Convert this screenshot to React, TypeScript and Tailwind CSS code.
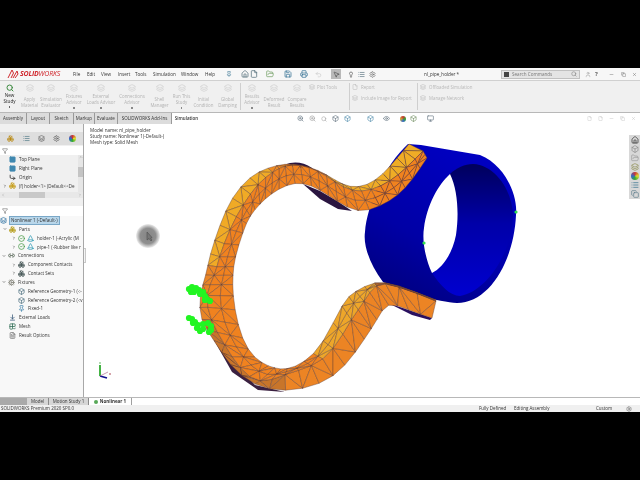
import React from 'react';
import { Filter, Home, File, FileText, FolderOpen, Save, Printer, Undo2, MousePointer2, Settings, Search, User, Minus, X, Copy, ZoomIn, Eye, Monitor, Box, ChevronRight, ChevronDown, ChevronUp, ChevronLeft, Pin, Lightbulb, List, Layers, Square, CornerDownRight, CircleCheck, Cone, Link2, Cog, ArrowDownToLine, Grid2x2Check, Boxes, type LucideIcon } from 'lucide-react';

type Pt = [number, number];

// outer edge, fold line, inner edge of the bent holder, end to end
const sections: [Pt, Pt, Pt][] = [
  [[409, 144], [423, 151], [427, 158]],
  [[397, 158], [406, 168], [412, 180]],
  [[383, 174], [390, 181], [398, 195]],
  [[367, 185], [371, 190], [380, 206]],
  [[350, 187], [352, 191], [358, 212]],
  [[335, 180], [335, 182], [337, 201]],
  [[318, 170], [318, 171], [320, 190]],
  [[300, 165], [300, 165], [303, 183]],
  [[285, 164], [285, 166], [287, 185]],
  [[268, 168], [273, 172], [271, 194]],
  [[250, 177], [258, 184], [260, 204]],
  [[232, 198], [243, 205], [250, 216]],
  [[220, 225], [230, 229], [243, 232]],
  [[210, 255], [219, 258], [235, 258]],
  [[206, 275], [215, 275], [233, 275]],
  [[200, 295], [206, 295], [233, 295]],
  [[201, 320], [211, 320], [238, 325]],
  [[214, 340], [225, 345], [248, 350]],
  [[230, 365], [240, 368], [262, 363]],
  [[255, 385], [260, 383], [275, 368]],
  [[285, 391], [285, 374], [287, 369]],
  [[320, 384], [312, 366], [304, 362]],
  [[345, 366], [333, 350], [323, 343]],
  [[365, 338], [352, 318], [343, 303]],
  [[377, 320], [364, 302], [355, 292]],
  [[388, 303], [376, 284], [375, 282]],
  [[408, 310], [397, 286], [397, 285]],
  [[432, 318], [436, 301], [436, 300]],
];

const catmull = (a: Pt, b: Pt, c: Pt, d: Pt, t: number): Pt => {
  const f = (p0: number, p1: number, p2: number, p3: number) =>
    0.5 * (2 * p1 + (p2 - p0) * t + (2 * p0 - 5 * p1 + 4 * p2 - p3) * t * t + (3 * p1 - p0 - 3 * p2 + p3) * t * t * t);
  return [f(a[0], b[0], c[0], d[0]), f(a[1], b[1], c[1], d[1])];
};

const rail = (k: 0 | 1 | 2) => {
  const out: Pt[] = [];
  for (let i = 0; i < sections.length - 1; i++) {
    const a = sections[Math.max(i - 1, 0)][k];
    const b = sections[i][k];
    const c = sections[i + 1][k];
    const d = sections[Math.min(i + 2, sections.length - 1)][k];
    out.push(b, catmull(a, b, c, d, 0.5));
  }
  out.push(sections[sections.length - 1][k]);
  // one smoothing pass takes the wobble out of the hand-read points
  return out.map((p, i) => {
    if (i === 0 || i === out.length - 1) return p;
    const l = out[i - 1];
    const r = out[i + 1];
    return [(l[0] + 2 * p[0] + r[0]) / 4, (l[1] + 2 * p[1] + r[1]) / 4] as Pt;
  });
};

const outerColor = (i: number) => {
  const s = i / 2;
  if (s < 5.5) return '#efac26';
  if (s < 9) return '#ee8a22';
  if (s < 13.5) return '#f0aa26';
  if (s < 16) return '#e98526';
  if (s < 20) return '#c8752a';
  return '#ec8424';
};
const innerColor = (i: number) => {
  const s = i / 2;
  if (s > 21 && s < 25) return '#eda62a';
  return '#f0821f';
};

const HolderMesh = () => {
  const A = rail(0);
  const B = rail(1);
  const C = rail(2);
  const M = B.map((p, i) => [(p[0] + C[i][0]) / 2, (p[1] + C[i][1]) / 2] as Pt);
  const tris: { pts: Pt[]; fill: string }[] = [];
  for (let i = 0; i < A.length - 1; i++) {
    const strip = (P: Pt[], Q: Pt[], fill: string, flip: boolean) => {
      if (flip) {
        tris.push({ pts: [P[i], Q[i], P[i + 1]], fill }, { pts: [Q[i], Q[i + 1], P[i + 1]], fill });
      } else {
        tris.push({ pts: [P[i], Q[i], Q[i + 1]], fill }, { pts: [P[i], Q[i + 1], P[i + 1]], fill });
      }
    };
    strip(A, B, outerColor(i), i % 2 === 0);
    strip(B, M, innerColor(i), i % 2 === 1);
    strip(M, C, innerColor(i), i % 2 === 0);
  }
  return (
    <g>
      {tris.map((t, i) => (
        <polygon key={i} points={t.pts.map((p) => p.join(',')).join(' ')} fill={t.fill} stroke="#5b3b35" strokeWidth={0.4} strokeLinejoin="round" />
      ))}
    </g>
  );
};

const clampUpper: Pt[] = [[189, 289], [192, 287], [196, 288], [199, 290], [203, 292], [205, 296], [207, 299], [210, 301], [205, 300], [200, 294], [194, 292], [191, 292]];
const clampLower: Pt[] = [[189, 318], [192, 319], [195, 322], [198, 325], [203, 324], [208, 323], [211, 326], [211, 330], [209, 332], [203, 329], [200, 331], [197, 328], [193, 323]];

const Model = () => (
  <svg className="absolute inset-0 w-full h-full" viewBox="84 124 556 273">
    <defs>
      <linearGradient id="outerBlue" x1="0.7" y1="0" x2="0.2" y2="1">
        <stop offset="0" stopColor="#0000c4" />
        <stop offset="0.6" stopColor="#0000a6" />
        <stop offset="1" stopColor="#00007c" />
      </linearGradient>
      <linearGradient id="innerBlue" x1="0" y1="0" x2="0" y2="1">
        <stop offset="0" stopColor="#00005c" />
        <stop offset="0.45" stopColor="#0000a8" />
        <stop offset="1" stopColor="#0000d0" />
      </linearGradient>
      <radialGradient id="pointerGlow">
        <stop offset="0" stopColor="#858585" />
        <stop offset="0.65" stopColor="#8f8f8f" />
        <stop offset="1" stopColor="#8f8f8f" stopOpacity="0.15" />
      </radialGradient>
    </defs>

    <circle cx={148} cy={236} r={12} fill="url(#pointerGlow)" />
    <path d="M147 232 L147 240 L149 238.5 L151 241 L152 240 L150.5 238 L152 237.5 Z" fill="#777" stroke="#444" strokeWidth={0.5} />

    {/* pipe */}
    <path d="M408 144 L421 145 L480 155 C505 165 518 195 516 215 C514 260 490 303 457 303 C440 302 400 292 383 282 C370 265 363 245 365 232 C367 205 385 165 408 144 Z" fill="url(#outerBlue)" />
    <path d="M450 174 C456 168 465 164 473 164 C495 165 512 190 513 215 C512 255 485 292 460 296 C450 296 440 285 432 273 Z" fill="url(#innerBlue)" />
    <path d="M450 174 C458 190 459 215 456 235 C452 255 442 268 432 273 C425 258 422 240 424 228 C427 205 438 185 450 174 Z" fill="#fff" />
    <circle cx={516} cy={212} r={1.6} fill="#2fe04f" />
    <circle cx={424} cy={243} r={1.6} fill="#2fe04f" />

    {/* dark undersides */}
    <path d="M303 184 L320 191 L337 201 L352 211 L338 209 L320 199 Z" fill="#2a1540" />
    <path d="M388 303 L432 318 L430 320 L412 315 Z" fill="#2a1060" />
    <path d="M285 165 C293 161 303 162 312 168 L300 168 Z" fill="#2a1540" />
    <path d="M214 340 L255 385 L285 392 L258 390 L232 372 Z" fill="#3a2040" />

    <HolderMesh />

    {/* fixture arrows */}
    {[...clampUpper, ...clampLower].map((d, i) => (
      <circle key={i} cx={d[0]} cy={d[1]} r={3.1} fill="#22f522" />
    ))}

    {/* triad */}
    <path d="M100 365 L100 376" stroke="#16a016" strokeWidth={1.6} />
    <path d="M100 376 L107 378" stroke="#101090" strokeWidth={1.8} />
    <path d="M100 376 L108 372" stroke="#b07090" strokeWidth={0.7} />
    <circle cx={110} cy={374} r={0.8} fill="#a03040" />
    <circle cx={100} cy={363} r={0.8} fill="#50b050" />
  </svg>
);

// high items carry a dropdown dot under their label, so their text sits 3px up
const ribbonItems = [
  { w: 'w-[21px]', label: 'Apply Material', high: false },
  { w: 'w-[22px]', label: 'Simulation Evaluator', high: false },
  { w: 'w-[24px]', label: 'Fixtures Advisor', high: true },
  { w: 'w-[30px]', label: 'External Loads Advisor', high: true },
  { w: 'w-[32px]', label: 'Connections Advisor', high: true },
  { w: 'w-[23px]', label: 'Shell Manager', high: false },
  { w: 'w-[21px]', label: 'Run This Study', high: true },
  { w: 'w-[23px]', label: 'Initial Condition', high: false },
  { w: 'w-[25px]', label: 'Global Damping', high: false },
];

const resultItems = [
  { w: 'w-[22px]', label: 'Results Advisor', high: true },
  { w: 'w-[22px]', label: 'Deformed Result', high: false },
  { w: 'w-[24px]', label: 'Compare Results', high: false },
];

const RibbonButton = ({ w, label, high }: { w: string; label: string; high: boolean }) => (
  <div className={`${w} flex flex-col items-center text-center shrink-0 text-[#b3b3b3] text-[4.4px] leading-[5.5px]`}>
    <Layers className={`w-[8px] h-[8px] mt-[3px] text-[#c4c4c4] ${high ? 'mb-[2px]' : 'mb-[5px]'}`} strokeWidth={1.5} />
    <span>{label}</span>
    {high && <span className="mt-[2px] w-[1.5px] h-[1.5px] bg-[#888]" />}
  </div>
);

const menus = [
  { label: 'File', w: 'w-[14px]' },
  { label: 'Edit', w: 'w-[14px]' },
  { label: 'View', w: 'w-[17px]' },
  { label: 'Insert', w: 'w-[17px]' },
  { label: 'Tools', w: 'w-[18px]' },
  { label: 'Simulation', w: 'w-[28px]' },
  { label: 'Window', w: 'w-[24px]' },
  { label: 'Help', w: 'w-[14px]' },
];

const cmdTabs = [
  { label: 'Assembly', w: 'w-[27px]' },
  { label: 'Layout', w: 'w-[23px]' },
  { label: 'Sketch', w: 'w-[24px]' },
  { label: 'Markup', w: 'w-[21px]' },
  { label: 'Evaluate', w: 'w-[23px]' },
  { label: 'SOLIDWORKS Add-Ins', w: 'w-[54px]' },
];

const TreeRow = ({ indent, label, icon: Icon, tone, arrow, cone }: { indent: string; label: string; icon: LucideIcon; tone: string; arrow?: 'r' | 'd'; cone?: boolean }) => (
  <div className={`flex items-center h-[8.85px] ${indent} whitespace-nowrap`}>
    {arrow === 'r' && <ChevronRight className="w-[4px] h-[4px] mr-[2px] shrink-0 text-[#333]" strokeWidth={3} />}
    {arrow === 'd' && <ChevronDown className="w-[4px] h-[4px] mr-[2px] shrink-0 text-[#333]" strokeWidth={3} />}
    <Icon className={`w-[7px] h-[7px] mr-[3px] shrink-0 ${tone}`} strokeWidth={2.6} />
    {cone && <Cone className="w-[7px] h-[7px] -ml-[1px] mr-[3px] shrink-0 text-[#3aa0b8]" strokeWidth={2.6} />}
    <span>{label}</span>
  </div>
);

const App = () => (
  <div className="w-[640px] h-[480px] bg-black flex flex-col overflow-hidden font-['Open_Sans','Liberation_Sans',sans-serif] text-[#333]">
    <div className="h-[68px] shrink-0" />
    <div className="h-[344px] shrink-0 flex flex-col bg-white blur-[0.25px]">
      {/* menu / title bar */}
      <div className="h-[13px] shrink-0 flex items-center bg-[#f7f7f7] text-[4.6px] border-b border-[#d0d0d0]">
        <div className="w-[73px] pl-[7px] flex items-center shrink-0">
          <svg viewBox="0 0 12 10" className="w-[12px] h-[10px] mr-[1px]">
            <path d="M1 9 L5 1 L6.5 4 L4 9 M6 9 L10 2 L11 5 L8 9" stroke="#d0282e" strokeWidth={1} fill="none" />
          </svg>
          <span className="text-[7px] font-bold italic text-[#d0282e] tracking-tight">SOLID</span>
          <span className="text-[7px] italic text-[#d0282e] tracking-tight">WORKS</span>
        </div>
        {menus.map((m) => (
          <span key={m.label} className={`${m.w} shrink-0`}>{m.label}</span>
        ))}
        <Pin className="ml-[7px] w-[6px] h-[6px] text-[#2a6a8a] shrink-0" />
        <div className="ml-[9px] flex items-center text-[#44606e] shrink-0">
          <Home className="w-[8px] h-[8px]" />
          <File className="ml-[1px] w-[8px] h-[8px]" />
          <FolderOpen className="ml-[8px] w-[8px] h-[8px] text-[#6a9a5a]" />
          <Save className="ml-[10px] w-[8px] h-[8px] text-[#2a6a90]" />
          <Printer className="ml-[8px] w-[8px] h-[8px] text-[#2a6a90]" />
          <Undo2 className="ml-[7px] w-[7px] h-[7px] text-[#c8c8c8]" />
          <span className="ml-[9px] w-[10px] h-[10px] bg-[#b9b9b9] flex items-center justify-center">
            <MousePointer2 className="w-[7px] h-[7px] text-[#444]" />
          </span>
          <Lightbulb className="ml-[7px] w-[6px] h-[7px] text-[#222]" />
          <List className="ml-[4px] w-[7px] h-[7px] text-[#44606e]" />
          <Settings className="ml-[4px] w-[7px] h-[7px] text-[#666]" />
        </div>
        <span className="ml-[48px] w-[42px] shrink-0 whitespace-nowrap">nl_pipe_holder *</span>
        <div className="ml-[35px] w-[79px] h-[9px] shrink-0 bg-[#e4e4e4] border-[0.5px] border-[#c0c0c0] flex items-center px-[2px] text-[#777]">
          <span className="w-[5px] h-[5px] bg-[#444] mr-[3px]" />
          <span className="flex-1">Search Commands</span>
          <Search className="w-[6px] h-[6px]" />
        </div>
        <div className="flex items-center text-[#666] shrink-0">
          <User className="ml-[5px] w-[6px] h-[7px] text-[#999]" />
          <span className="ml-[4px] text-[6px] font-bold">?</span>
          <Minus className="ml-[11px] w-[5px] h-[5px]" />
          <Copy className="ml-[7px] w-[5px] h-[5px]" />
          <X className="ml-[6px] w-[5px] h-[5px]" />
        </div>
      </div>

      {/* ribbon */}
      <div className="h-[32px] shrink-0 flex bg-[#f0f0f0] border-b border-[#b8b8b8]">
        <div className="w-[19px] shrink-0 flex flex-col items-center text-center text-[4.6px] leading-[5.5px] text-[#222]">
          <Search className="w-[8px] h-[8px] mt-[3px] mb-[1px] text-[#3d8a40]" strokeWidth={3} />
          <span>New Study</span>
          <span className="mt-[2px] w-[1.5px] h-[1.5px] bg-[#666]" />
        </div>
        {ribbonItems.map((r) => (
          <RibbonButton key={r.label} w={r.w} label={r.label} high={r.high} />
        ))}
        <div className="w-px my-[2px] bg-[#cfcfcf] shrink-0" />
        {resultItems.map((r) => (
          <RibbonButton key={r.label} w={r.w} label={r.label} high={r.high} />
        ))}
        <div className="w-[40px] shrink-0 pt-[3px] text-[#b8b8b8] text-[4.4px] flex items-start gap-[2px]">
          <Layers className="w-[6px] h-[6px]" />
          <span>Plot Tools</span>
        </div>
        <div className="w-px my-[2px] bg-[#cfcfcf] shrink-0" />
        <div className="w-[67px] shrink-0 pl-[2px] pt-[3px] text-[#b8b8b8] text-[4.4px] flex flex-col gap-[4px]">
          <div className="flex items-center gap-[3px]"><File className="w-[6px] h-[6px]" /><span>Report</span></div>
          <div className="flex items-center gap-[3px] whitespace-nowrap"><Layers className="w-[6px] h-[6px]" /><span>Include Image for Report</span></div>
        </div>
        <div className="w-px my-[2px] bg-[#cfcfcf] shrink-0" />
        <div className="flex-1 pl-[2px] pt-[3px] text-[#b8b8b8] text-[4.4px] flex flex-col gap-[4px]">
          <div className="flex items-center gap-[3px]"><Layers className="w-[6px] h-[6px]" /><span>Offloaded Simulation</span></div>
          <div className="flex items-center gap-[3px]"><Layers className="w-[6px] h-[6px]" /><span>Manage Network</span></div>
        </div>
      </div>

      {/* command tabs */}
      <div className="h-[11px] shrink-0 flex items-stretch text-[4.5px] bg-white">
        {cmdTabs.map((t) => (
          <span key={t.label} className={`${t.w} shrink-0 flex items-center justify-center bg-[#dcdcdc] border-r border-[#9a9a9a] whitespace-nowrap`}>{t.label}</span>
        ))}
        <span className="w-[29px] shrink-0 flex items-center justify-center bg-white font-semibold">Simulation</span>
        <div className="ml-[96px] flex items-center gap-[5px] text-[#5a6a78] shrink-0">
          <ZoomIn className="w-[7px] h-[7px]" />
          <ZoomIn className="w-[7px] h-[7px] text-[#999]" />
          <Search className="w-[6px] h-[6px] text-[#999]" />
          <Box className="w-[7px] h-[7px]" />
          <Box className="w-[7px] h-[7px] text-[#4a88a8]" />
          <Box className="ml-[11px] w-[7px] h-[7px] text-[#4a88a8]" />
          <Eye className="ml-[4px] w-[7px] h-[7px]" />
          <span className="ml-[5px] w-[6px] h-[6px] rounded-full bg-[conic-gradient(#c33,#3a3,#36c,#ca3,#c33)]" />
          <Box className="-ml-[1px] w-[7px] h-[7px] text-[#6a8a5a]" />
          <Monitor className="ml-[5px] w-[7px] h-[7px]" />
        </div>
        <div className="ml-auto mr-[4px] flex items-center gap-[6px] text-[#c0c0c0]">
          <File className="w-[5px] h-[5px]" />
          <File className="w-[5px] h-[5px]" />
          <Minus className="w-[5px] h-[5px]" />
          <Copy className="w-[5px] h-[5px]" />
          <X className="w-[5px] h-[5px]" />
        </div>
      </div>

      {/* main */}
      <div className="flex-1 min-h-0 flex">
        <aside className="w-[84px] shrink-0 bg-[#f0f0f0] border-r border-[#a8a8a8] flex flex-col text-[4.5px] overflow-hidden">
          <div className="h-[8px] shrink-0" />
          <div className="h-[13px] shrink-0 bg-[#dedede] flex items-center justify-around px-[3px]">
            <Boxes className="w-[7px] h-[7px] text-[#b8860b]" />
            <List className="w-[7px] h-[7px] text-[#3a6a7a]" />
            <Layers className="w-[7px] h-[7px] text-[#555]" />
            <Settings className="w-[7px] h-[7px] text-[#555]" />
            <span className="w-[7px] h-[7px] rounded-full bg-[conic-gradient(#c33,#dd3,#3a3,#36c,#c33)]" />
          </div>
          <div className="h-[9px] mt-[1px] shrink-0 bg-white flex items-center pl-[2px]">
            <Filter className="w-[6px] h-[6px] text-[#555]" />
          </div>
          <div className="h-[37px] shrink-0 relative overflow-hidden">
            <TreeRow indent="pl-[9px]" label="Top Plane" icon={Square} tone="text-[#3f88b0] fill-[#3f88b0]" />
            <TreeRow indent="pl-[9px]" label="Right Plane" icon={Square} tone="text-[#3f88b0] fill-[#3f88b0]" />
            <TreeRow indent="pl-[9px]" label="Origin" icon={CornerDownRight} tone="text-[#222]" />
            <TreeRow indent="pl-[3px]" label="(f) holder<1> (Default<<De" icon={Boxes} tone="text-[#c8a020]" arrow="r" />
            <div className="absolute right-0 top-0 bottom-0 w-[5px] bg-[#e6e6e6] flex flex-col items-center">
              <ChevronUp className="w-[4px] h-[4px] text-[#666]" />
              <div className="mt-[8px] w-full h-[10px] bg-[#c4c4c4]" />
            </div>
          </div>
          <div className="h-[6px] shrink-0 bg-[#e8e8e8] flex items-center justify-between px-[1px]">
            <ChevronLeft className="w-[4px] h-[4px] text-[#888]" />
            <div className="w-[26px] h-full bg-[#c8c8c8] -ml-[20px]" />
            <ChevronRight className="w-[4px] h-[4px] text-[#888]" />
          </div>
          <div className="h-[8px] shrink-0" />
          <div className="h-[10px] shrink-0 bg-white flex items-center pl-[2px]">
            <Filter className="w-[6px] h-[6px] text-[#555]" />
          </div>
          <div className="flex-1 bg-[#f8f8f8]">
            <div className="flex items-center h-[8.85px] whitespace-nowrap">
              <Layers className="w-[7px] h-[7px] mr-[2px] shrink-0 text-[#3a7aa8]" strokeWidth={2.6} />
              <span className="bg-[#b8d6ea] px-[1px] border-[0.5px] border-[#7aa8c8]">Nonlinear 1 (-Default-)</span>
            </div>
            <TreeRow indent="pl-[3px]" label="Parts" icon={Boxes} tone="text-[#b8a020]" arrow="d" />
            <TreeRow indent="pl-[12px]" label="holder-1 (-Acrylic (M" icon={CircleCheck} tone="text-[#4a9a4a]" arrow="r" cone />
            <TreeRow indent="pl-[12px]" label="pipe-1 (-Rubber like r" icon={CircleCheck} tone="text-[#4a9a4a]" arrow="r" cone />
            <TreeRow indent="pl-[2px]" label="Connections" icon={Link2} tone="text-[#4a5a4a]" arrow="d" />
            <TreeRow indent="pl-[12px]" label="Component Contacts" icon={Boxes} tone="text-[#4a5a5a]" arrow="r" />
            <TreeRow indent="pl-[12px]" label="Contact Sets" icon={Boxes} tone="text-[#4a5a5a]" arrow="r" />
            <TreeRow indent="pl-[2px]" label="Fixtures" icon={Cog} tone="text-[#8a8a80]" arrow="d" />
            <TreeRow indent="pl-[18px]" label="Reference Geometry-1 (-:-" icon={Box} tone="text-[#5a7a88]" />
            <TreeRow indent="pl-[18px]" label="Reference Geometry-2 (-:v" icon={Box} tone="text-[#5a7a88]" />
            <TreeRow indent="pl-[18px]" label="Fixed-1" icon={Pin} tone="text-[#4a8ab0]" />
            <TreeRow indent="pl-[9px]" label="External Loads" icon={ArrowDownToLine} tone="text-[#3a5a7a]" />
            <TreeRow indent="pl-[9px]" label="Mesh" icon={Grid2x2Check} tone="text-[#2a6a50]" />
            <TreeRow indent="pl-[9px]" label="Result Options" icon={FileText} tone="text-[#777]" />
          </div>
        </aside>

        <main className="flex-1 relative bg-white overflow-hidden">
          <Model />
          <div className="absolute left-[6px] top-[3px] text-[4.6px] leading-[6px] text-[#333]">
            <div>Model name: nl_pipe_holder</div>
            <div>Study name: Nonlinear 1(-Default-)</div>
            <div>Mesh type: Solid Mesh</div>
          </div>
          <div className="absolute left-0 top-[124px] w-[2px] h-[15px] border border-l-0 border-[#c8c8c8] bg-[#f4f4f4]" />
          <div className="absolute right-0 top-[11px] w-[11px] bg-[#d8d8d8] flex flex-col items-center gap-[1px] py-[1px]">
            <Home className="w-[8px] h-[8px] text-[#222]" />
            <Box className="w-[8px] h-[8px] text-[#888]" />
            <FolderOpen className="w-[8px] h-[8px] text-[#999]" />
            <Layers className="w-[8px] h-[8px] text-[#8a8a4a]" />
            <span className="w-[8px] h-[8px] rounded-full bg-[conic-gradient(#c33,#dd3,#3a3,#36c,#c33)]" />
            <List className="w-[8px] h-[8px] text-[#2a6a8a]" />
            <Copy className="w-[8px] h-[8px] text-[#5a7a8a]" />
          </div>
        </main>
      </div>

      {/* bottom tabs */}
      <div className="h-[8px] shrink-0 flex items-stretch bg-[#d6d6d6] text-[4.5px] border-t border-[#b8b8b8]">
        <span className="w-[27px] shrink-0 bg-[#a9a9a9]" />
        <span className="w-[22px] shrink-0 flex items-center justify-center border-r border-[#8a8a8a]">Model</span>
        <span className="w-[40px] shrink-0 flex items-center justify-center border-r border-[#8a8a8a] whitespace-nowrap">Motion Study 1</span>
        <span className="w-[42px] shrink-0 flex items-center justify-center gap-[2px] bg-white font-bold whitespace-nowrap">
          <span className="w-[4px] h-[4px] rounded-full bg-[#58a858]" />
          Nonlinear 1
        </span>
        <span className="flex-1 bg-white border-l border-[#a0a0a0]" />
      </div>

      {/* status bar */}
      <div className="h-[7px] shrink-0 flex items-center bg-[#f0f0f0] text-[4.5px] pl-[1px] whitespace-nowrap">
        <span className="w-[478px] shrink-0">SOLIDWORKS Premium 2020 SP0.0</span>
        <span className="w-[35px] shrink-0">Fully Defined</span>
        <span className="w-[82px] shrink-0">Editing Assembly</span>
        <span className="w-[30px] shrink-0">Custom</span>
        <Settings className="w-[6px] h-[6px] text-[#666]" />
      </div>
    </div>
    <div className="flex-1" />
  </div>
);

export default App;
